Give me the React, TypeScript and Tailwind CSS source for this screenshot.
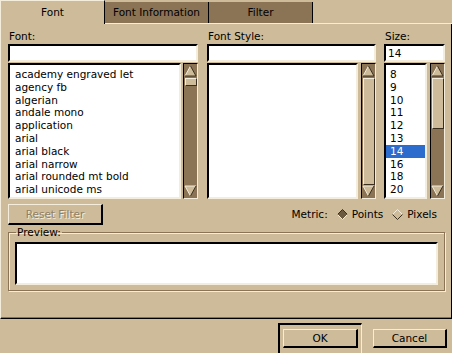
import React from "react";

const fonts = [
  "academy engraved let",
  "agency fb",
  "algerian",
  "andale mono",
  "application",
  "arial",
  "arial black",
  "arial narrow",
  "arial rounded mt bold",
  "arial unicode ms",
];

const sizes = ["8", "9", "10", "11", "12", "13", "14", "16", "18", "20"];

function Arrow({ down }: { down?: boolean }) {
  return (
    <svg width="13" height="12" viewBox="0 0 13 12" className="block shrink-0">
      {down ? (
        <>
          <polygon points="1,1 12,1 6.5,11" fill="#cdbb99" />
          <polyline points="1,1 12,1" fill="none" stroke="#f5eddc" />
          <polyline points="1,1 6.5,11" fill="none" stroke="#f5eddc" />
          <polyline points="12,1 6.5,11" fill="none" stroke="#3a2f1f" />
        </>
      ) : (
        <>
          <polygon points="6.5,1 12,11 1,11" fill="#cdbb99" />
          <polyline points="6.5,1 1,11" fill="none" stroke="#f5eddc" />
          <polyline points="6.5,1 12,11" fill="none" stroke="#3a2f1f" />
          <polyline points="1,11 12,11" fill="none" stroke="#3a2f1f" />
        </>
      )}
    </svg>
  );
}

function ScrollBar({ thumb }: { thumb: string }) {
  return (
    <div className="w-[15px] shrink-0 flex flex-col items-center bg-[#8b7355] border-l border-t border-black border-r border-r-[#f5eddc] border-b border-b-[#f5eddc] py-[1px]">
      <Arrow />
      <div
        className={`${thumb} w-[12px] mt-[1px] bg-[#cdbb99] border-t border-l border-[#f5eddc] border-r border-r-[#3a2f1f] border-b border-b-[#3a2f1f]`}
      />
      <div className="flex-1" />
      <Arrow down />
    </div>
  );
}

function Sunken({ className, children }: { className?: string; children?: React.ReactNode }) {
  return (
    <div
      className={`bg-white border-t-2 border-l-2 border-t-black border-l-black border-b-2 border-r-2 border-b-[#f5eddc] border-r-[#f5eddc] ${className ?? ""}`}
    >
      {children}
    </div>
  );
}

function Button({ label, className }: { label: string; className?: string }) {
  return (
    <div
      className={`h-[19px] flex items-center justify-center bg-[#cdbb99] border-t border-l border-[#f5eddc] border-b-2 border-r-2 border-b-black border-r-black ${className ?? ""}`}
    >
      {label}
    </div>
  );
}

function Diamond({ on }: { on?: boolean }) {
  return (
    <svg width="11" height="11" viewBox="0 0 11 11" className="block">
      <polygon points="5.5,0.5 10.5,5.5 5.5,10.5 0.5,5.5" fill={on ? "#6b5a3f" : "#cdbb99"} />
      <polyline points="0.5,5.5 5.5,0.5 10.5,5.5" fill="none" stroke={on ? "#3a2f1f" : "#f5eddc"} />
      <polyline points="0.5,5.5 5.5,10.5 10.5,5.5" fill="none" stroke={on ? "#f5eddc" : "#3a2f1f"} />
    </svg>
  );
}

export default function App() {
  return (
    <div className="w-[452px] h-[353px] bg-[#cdbb99] flex flex-col overflow-hidden font-['DejaVu_Sans',sans-serif] text-[10.5px] leading-[13px] text-black">
      {/* tabs */}
      <div className="flex h-[24px] shrink-0">
        <div className="w-[105px] pt-[5px] text-center border-t border-l border-[#f5eddc] border-r border-r-black">
          Font
        </div>
        <div className="flex-1 flex items-end border-b border-[#f5eddc]">
          <div className="w-[104px] h-[21px] flex items-center justify-center bg-[#8b7355] border-r border-black">
            Font Information
          </div>
          <div className="w-[104px] h-[21px] flex items-center justify-center bg-[#8b7355] border-r border-black">
            Filter
          </div>
        </div>
      </div>

      {/* panel */}
      <div className="h-[295px] shrink-0 flex flex-col border-l border-[#f5eddc] border-r border-r-black border-b border-b-black shadow-[inset_0_-1px_0_#8b7355] pl-[7px] pr-[6px] pt-[6px]">
        <div className="flex">
          <div className="w-[190px] flex flex-col">
            <div className="pl-[1px] mb-[1px]">Font:</div>
            <Sunken className="h-[18px]" />
            <div className="flex gap-[2px] h-[136px] mt-[1px]">
              <Sunken className="flex-1 pt-[3px] pl-[5px]">
                {fonts.map((f) => (
                  <div key={f} className="h-[12.8px] whitespace-nowrap">
                    {f}
                  </div>
                ))}
              </Sunken>
              <ScrollBar thumb="h-[8px]" />
            </div>
          </div>

          <div className="w-[169px] ml-[9px] flex flex-col">
            <div className="pl-[1px] mb-[1px]">Font Style:</div>
            <Sunken className="h-[18px]" />
            <div className="flex gap-[3px] h-[136px] mt-[1px]">
              <Sunken className="flex-1" />
              <ScrollBar thumb="h-[107px]" />
            </div>
          </div>

          <div className="w-[61px] ml-[8px] flex flex-col">
            <div className="pl-[1px] mb-[1px]">Size:</div>
            <Sunken className="h-[18px] pl-[2px] pt-[1px]">14</Sunken>
            <div className="flex gap-[3px] h-[136px] mt-[1px]">
              <Sunken className="flex-1 pt-[3px]">
                {sizes.map((s) => (
                  <div
                    key={s}
                    className={`h-[12.8px] pl-[4px] ${s === "14" ? "bg-[#2b6ccc] text-white" : ""}`}
                  >
                    {s}
                  </div>
                ))}
              </Sunken>
              <ScrollBar thumb="h-[51px]" />
            </div>
          </div>
        </div>

        {/* reset + metric */}
        <div className="flex items-center mt-[5px] h-[21px]">
          <Button
            label="Reset Filter"
            className="w-[95px] h-[21px] text-[#8f8068] [text-shadow:1px_1px_0_#f5eddc]"
          />
          <div className="flex-1" />
          <div className="flex items-center mr-[8px]">
            <span className="mr-[9px]">Metric:</span>
            <Diamond on />
            <span className="ml-[4px] mr-[9px]">Points</span>
            <Diamond />
            <span className="ml-[4px]">Pixels</span>
          </div>
        </div>

        {/* preview */}
        <fieldset className="mt-[1px] h-[65px] w-[437px] border border-[#8b7355] shadow-[inset_1px_1px_0_#f5eddc,1px_1px_0_#f5eddc] px-[6px] pb-[5px]">
          <legend className="ml-[1px] px-[1px]">Preview:</legend>
          <Sunken className="h-[43px] mt-[3px]" />
        </fieldset>
      </div>

      {/* footer */}
      <div className="flex items-start justify-end pr-[5px] pt-[4px]">
        <div className="w-[84px] h-[34px] border-t-2 border-l-2 border-black border-r border-r-[#f5eddc] pl-[3px] pt-[4px] pr-[3px]">
          <Button label="OK" className="w-[75px]" />
        </div>
        <Button label="Cancel" className="w-[74px] ml-[11px] mt-[6px]" />
      </div>
    </div>
  );
}
